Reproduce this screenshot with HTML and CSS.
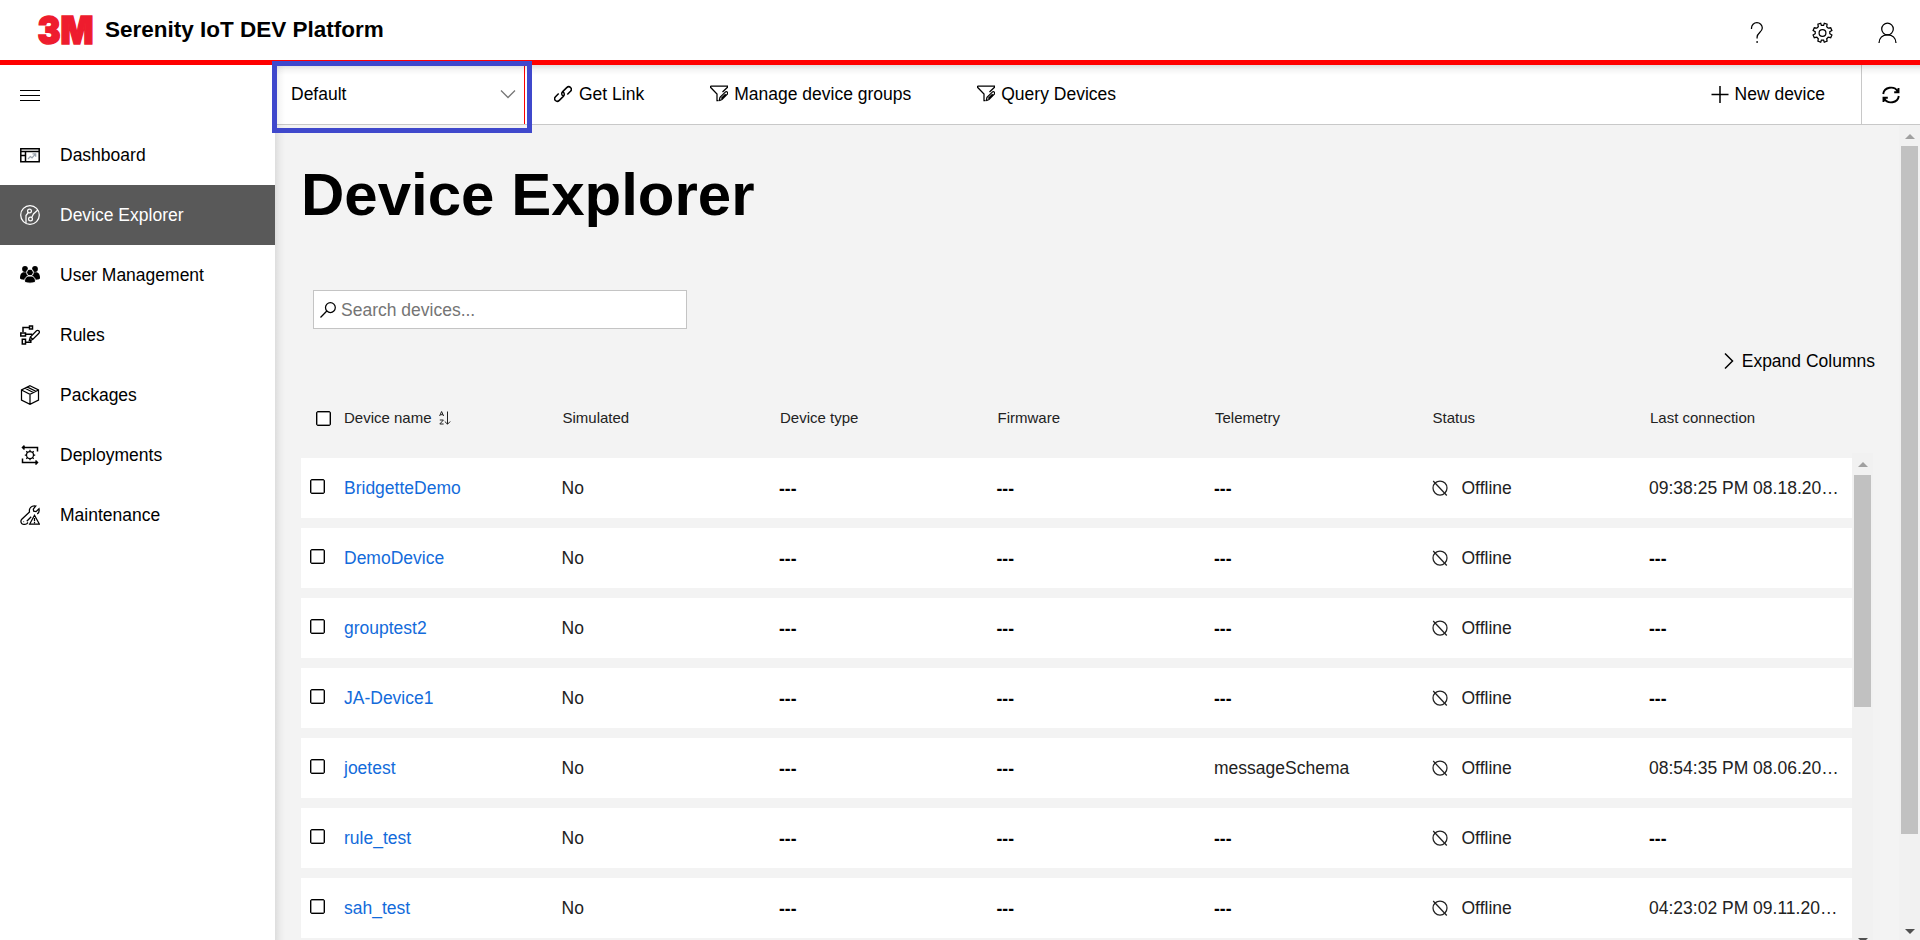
FILE: index.html
```html
<!DOCTYPE html>
<html lang="en">
<head>
<meta charset="utf-8">
<title>Serenity IoT DEV Platform</title>
<link rel="stylesheet" href="styles.css">
</head>
<body>
<svg class="sprite" aria-hidden="true">
  <symbol id="i-offline" viewBox="0 0 16 16"><circle cx="8" cy="8" r="7"/><path d="M1.200 1 14.800 15.500"/></symbol>
  <symbol id="i-filter" viewBox="0 0 18 17"><path d="M.5 1h17v1.300L12.500 7M.5 1v1.300L7 9v6.500h1.500"/><path d="m9.200 15.800.8-3.400 5.300-5.300q1.200-.9 2 0 .8.900 0 2L12 14.500l-2.800 1.300M11.300 13.500l4.300-4.400"/></symbol>
</svg>

<header class="header">
  <svg class="logo" width="56" height="32" viewBox="0 0 56 32"><text class="logo-text" x="-.5" y="29.500" textLength="56" lengthAdjust="spacingAndGlyphs">3M</text></svg>
  <span class="app-title">Serenity IoT DEV Platform</span>
  <div class="header-icons">
    <svg class="icon" width="20" height="22" viewBox="0 0 20 22"><path d="M5.500 7V6a5.400 5.300 0 0 1 10.800 0c0 4-5.200 5-5.200 9v1.500M11.100 19v2"/></svg>
    <svg class="icon" width="22" height="22" viewBox="0 0 22 22"><circle cx="11.500" cy="11" r="3.400"/><path d="M9.700 1.200 10.400 3.400h2.200l.7-2.200 2.800 1-.4 2.500 1.500 1.500 2.500-.4 1.200 2.700-2.100 1.200v2l2.100 1.200-1.200 2.800-2.500-.5-1.500 1.500.4 2.500-2.800 1.100-.7-2.100H10.400l-.7 2.100-2.800-1.100.4-2.500-1.500-1.500-2.500.5-1.200-2.800 2.100-1.200v-2L2.100 8.500l1.200-2.700 2.500.4 1.500-1.500-.4-2.500z"/></svg>
    <svg class="icon" width="20" height="22" viewBox="0 0 20 22"><circle cx="9.500" cy="7" r="5.800"/><path d="M1 21c.2-5 3.600-8.200 8.500-8.200s8.300 3.200 8.500 8.200"/></svg>
  </div>
</header>

<div class="body">
  <nav class="sidebar">
    <div class="nav-item"><svg class="icon" width="20" height="20" viewBox="0 0 20 20"><path class="line" d="M0 5.500h20M0 10.500h20M0 15.500h20"/></svg></div>
    <div class="nav-item"><svg class="icon" width="20" height="20" viewBox="0 0 20 20"><path class="medium" d="M.8 3.700h18.400v13H.8zM.8 6.500h18.400M5.500 6.500v10M.8 10.500h4.700"/><path class="muted" d="m8 14 2.300-2.500 1.700 1.300 3.500-4M12.500 8.800h3.200v3"/></svg>Dashboard</div>
    <div class="nav-item active"><svg class="icon" width="20" height="20" viewBox="0 0 20 20"><circle cx="10" cy="10" r="9.300"/><circle cx="9.500" cy="6" r="1.900"/><circle cx="10.500" cy="14" r="1.900"/><path d="M8.300 7.500 6 10.500v7.500M11.700 12.500l1.800-3.500 4.300-4"/></svg>Device Explorer</div>
    <div class="nav-item"><svg class="icon solid" width="20" height="20" viewBox="0 0 20 20"><circle cx="5" cy="4" r="2.900"/><circle cx="15" cy="4" r="2.900"/><path d="M0 13.500c0-4 1.300-6.200 4-6.200h12c2.700 0 4 2.200 4 6.200-1 .8-2.300 1.200-4 1.200H4c-1.700 0-3-.4-4-1.200z"/><g class="cut"><circle cx="10" cy="7.500" r="3.400"/><path d="M4.500 17c0-4 1.800-6 5.500-6s5.500 2 5.500 6c-2.500 1.600-8.500 1.600-11 0z"/></g></svg>User Management</div>
    <div class="nav-item"><svg class="icon" width="20" height="20" viewBox="0 0 20 20"><path class="medium" d="M3 7V2.500h6.300M9.500 1h3v3h-3zM.8 8h4.700v3H.8zM2.300 14.300h3.200v4.700H2.300zM5.500 9.300h6.800M5.500 17.200h5.300v-2.400"/><path d="m9.300 15.500 1-3.500 6.200-6.200q1.200-.9 2.400 0 1 1.300 0 2.500l-6.200 6.200zM10.300 12l2.300 2.300"/></svg>Rules</div>
    <div class="nav-item"><svg class="icon" width="20" height="20" viewBox="0 0 20 20"><path d="M10 .8 18.500 5v10L10 19.300 1.500 15V5zM1.500 5 10 9.300 18.500 5M10 9.300v10M5 3.300 13.300 7.500M7.500 2.100 15.800 6.300"/></svg>Packages</div>
    <div class="nav-item"><svg class="icon" width="20" height="20" viewBox="0 0 20 20"><path class="medium" d="M17.500 6.500V2.500H2.500M4.500.6 2.500 2.500l2 2M2.500 13.500v4h15M15.500 15.500l2 2-2 2"/><circle cx="10" cy="10" r="3.500"/><path d="M10 4.800v1.700M10 13.500v1.700M4.800 10h1.700M13.500 10h1.700M6.300 6.300l1.200 1.200M12.500 12.500l1.200 1.200M6.300 13.700l1.200-1.200M12.500 7.500l1.200-1.200"/></svg>Deployments</div>
    <div class="nav-item"><svg class="icon" width="20" height="20" viewBox="0 0 20 20"><path d="M8 17.500l-1.200 1.200q-2.800 1.500-5.200-.3-1.500-2.200.2-4.200L9.500 7C8.800 3.200 11.200.3 15.800 1L13.300 4.200l.4 2 2.300.4L19 3.700c.6 3-.3 4.500-1.800 5.300M6.800 16.300l4.400-4.600M3.500 16.600h.6"/><path d="M14.500 10.300 19.300 19H9.700zM14.500 13v3.300M14.500 17v1.200"/></svg>Maintenance</div>
  </nav>

  <main class="main">
    <div class="toolbar">
      <div class="group-select"><span>Default</span><svg class="icon gray" width="16" height="10" viewBox="0 0 16 10"><path d="m1 1.500 7 7 7-7"/></svg></div>
      <div class="tool get-link"><svg class="icon medium" width="18" height="18" viewBox="0 0 18 18"><path d="M9.300 11.300c-2-1.300-2-3.300-.6-4.700l4-4c2.700-2.600 6.300 1 3.800 3.700l-3.200 3.200M8.700 6.700c2 1.300 2 3.300.6 4.700l-4 4c-2.700 2.600-6.300-1-3.800-3.700l3.200-3.200"/></svg>Get Link</div>
      <div class="tool"><svg class="icon" width="18" height="17"><use href="#i-filter"/></svg>Manage device groups</div>
      <div class="tool"><svg class="icon" width="18" height="17"><use href="#i-filter"/></svg>Query Devices</div>
      <div class="tool new-device"><svg class="icon medium" width="18" height="18" viewBox="0 0 18 18"><path d="M.5 9.500h17M9 1v17"/></svg>New device</div>
      <div class="refresh"><svg class="icon thick" width="18" height="18" viewBox="0 0 18 18"><path d="M1.200 8a7.800 7.300 0 0 1 14.600-2.500M16.800 10a7.800 7.300 0 0 1-14.600 2.500M16.500 2v4.300h-4.300M1.500 16v-4.300h4.300"/></svg></div>
    </div>

    <div class="content">
      <div class="page">
        <h1 class="page-title">Device Explorer</h1>
        <div class="search"><svg class="icon" width="16" height="16" viewBox="0 0 16 16"><circle cx="10.400" cy="5.600" r="4.900"/><path d="M6.800 9 .5 15.500"/></svg>Search devices...</div>
        <div class="expand"><svg class="icon medium" width="10" height="18" viewBox="0 0 10 18"><path d="m1 1.500 7.500 7.500L1 16.500"/></svg>Expand Columns</div>

        <div class="grid-head">
          <span class="check"></span>
          <span class="name">Device name <svg class="icon thin" width="12" height="14" viewBox="0 0 12 14"><path d="m.6 5 2-4.500 2 4.500M1.300 3.700h2.600M.8 9h3.600l-3.600 4h3.800M8.500.5v12.500M5.800 10.500l2.700 2.700 2.700-2.700"/></svg></span>
          <span>Simulated</span><span>Device type</span><span>Firmware</span><span>Telemetry</span><span>Status</span><span>Last connection</span>
        </div>

        <div class="grid-body">
          <div class="rows">
            <div class="row"><span class="check"></span><a class="name">BridgetteDemo</a><span>No</span><b>---</b><b>---</b><b>---</b><span class="status"><svg class="icon" width="16" height="16"><use href="#i-offline"/></svg>Offline</span><span class="last">09:38:25 PM 08.18.20…</span></div>
            <div class="row"><span class="check"></span><a class="name">DemoDevice</a><span>No</span><b>---</b><b>---</b><b>---</b><span class="status"><svg class="icon" width="16" height="16"><use href="#i-offline"/></svg>Offline</span><b>---</b></div>
            <div class="row"><span class="check"></span><a class="name">grouptest2</a><span>No</span><b>---</b><b>---</b><b>---</b><span class="status"><svg class="icon" width="16" height="16"><use href="#i-offline"/></svg>Offline</span><b>---</b></div>
            <div class="row"><span class="check"></span><a class="name">JA-Device1</a><span>No</span><b>---</b><b>---</b><b>---</b><span class="status"><svg class="icon" width="16" height="16"><use href="#i-offline"/></svg>Offline</span><b>---</b></div>
            <div class="row"><span class="check"></span><a class="name">joetest</a><span>No</span><b>---</b><b>---</b><span>messageSchema</span><span class="status"><svg class="icon" width="16" height="16"><use href="#i-offline"/></svg>Offline</span><span class="last">08:54:35 PM 08.06.20…</span></div>
            <div class="row"><span class="check"></span><a class="name">rule_test</a><span>No</span><b>---</b><b>---</b><b>---</b><span class="status"><svg class="icon" width="16" height="16"><use href="#i-offline"/></svg>Offline</span><b>---</b></div>
            <div class="row"><span class="check"></span><a class="name">sah_test</a><span>No</span><b>---</b><b>---</b><b>---</b><span class="status"><svg class="icon" width="16" height="16"><use href="#i-offline"/></svg>Offline</span><span class="last">04:23:02 PM 09.11.20…</span></div>
          </div>
          <div class="scrollbar inner"><i class="arrow up"></i><i class="thumb"></i><i class="arrow down"></i></div>
        </div>
      </div>
      <div class="scrollbar outer"><i class="arrow up"></i><i class="thumb"></i><i class="arrow down"></i></div>
    </div>
    <div class="highlight"></div>
  </main>
</div>
</body>
</html>
```
FILE: styles.css
```css
* { box-sizing: border-box; }
body {
  margin: 0;
  height: 940px;
  overflow: hidden;
  display: flex;
  flex-direction: column;
  background: #fff;
  color: #000;
  font: 17.5px/20px "Liberation Sans", Arial, sans-serif;
}
.sprite { position: absolute; width: 0; height: 0; }
.icon { flex: none; fill: none; stroke: currentColor; stroke-width: 1.25; }
.line { stroke-width: 1; }
.thin { stroke-width: 1; }
.medium { stroke-width: 1.5; }
.thick { stroke-width: 1.9; }
.gray { stroke: #777; }
.muted { stroke: #9aa3ad; }
.solid { fill: currentColor; stroke: none; }
.cut { stroke: #fff; stroke-width: 1; }

.header {
  flex: none;
  height: 65px;
  border-bottom: 5px solid #f00;
  display: flex;
  align-items: center;
  padding: 0 22px 0 38px;
}
.logo { overflow: visible; margin-right: 11px; }
.logo-text {
  font: 900 38.5px Inter, "Liberation Sans", sans-serif;
  fill: #ee1c2e;
  stroke: #ee1c2e;
  stroke-width: 1.6;
}
.app-title { font-size: 22.5px; font-weight: 700; }
.header-icons { margin-left: auto; display: flex; gap: 45px; padding-top: 6px; }

.body { flex: 1; min-height: 0; display: flex; }
.sidebar { width: 275px; flex: none; }
.nav-item { height: 60px; display: flex; align-items: center; gap: 20px; padding-left: 20px; }
.nav-item.active { background: #595959; color: #fff; }

.main { flex: 1; min-width: 0; position: relative; display: flex; flex-direction: column; }
.main::before {
  content: "";
  position: absolute;
  inset: 0;
  z-index: 1;
  pointer-events: none;
  background:
    linear-gradient(to bottom, rgba(0,0,0,.13), rgba(0,0,0,.04) 5px, transparent 10px),
    linear-gradient(to right, rgba(0,0,0,.09), rgba(0,0,0,.03) 5px, transparent 10px);
}
.toolbar {
  flex: none;
  height: 60px;
  background: #fff;
  border-bottom: 1px solid #c8c8c8;
  display: flex;
  align-items: center;
}
.group-select {
  width: 250px;
  align-self: stretch;
  border-right: 1px solid #f00;
  display: flex;
  align-items: center;
  justify-content: space-between;
  padding: 0 8px 2px 16px;
}
.tool { display: flex; align-items: center; gap: 6px; margin-right: 66px; padding-bottom: 2px; }
.get-link { margin-left: 29px; gap: 7px; }
.new-device { margin-left: auto; margin-right: 36px; }
.refresh { width: 59px; align-self: stretch; border-left: 1px solid #c8c8c8; display: flex; align-items: center; padding-left: 20px; }

.content { flex: 1; min-height: 0; background: #f3f3f3; display: flex; justify-content: space-between; }
.page { width: 1572px; margin-left: 26px; display: flex; flex-direction: column; }
.page-title { margin: 35px 0 0; font-size: 60px; line-height: 70px; }
.search {
  width: 374px;
  height: 39px;
  margin: 60px 0 0 12px;
  padding-left: 6px;
  border: 1px solid #c4c4c4;
  background: #fff;
  color: #757575;
  display: flex;
  align-items: center;
  gap: 5px;
}
.search .icon { color: #000; }
.expand { margin: 22px -2px 0 0; height: 20px; display: flex; align-items: center; justify-content: flex-end; gap: 8px; }

.grid-head, .row {
  display: grid;
  grid-template-columns: 43px repeat(6, 217.500px) 1fr;
  align-items: center;
  width: 1551px;
}
.grid-head { height: 20px; margin-top: 37px; font-size: 15px; color: #222; }
.grid-head > span:nth-child(n+3) { padding-left: 1px; }
.check { width: 15px; height: 15px; border: 1px solid #000; box-shadow: inset 0 0 0 .5px #333; border-radius: 2px; background: #fff; margin-left: 9px; }
.grid-head .check { margin-left: 15px; }
.name .icon { vertical-align: -2px; margin-left: 3px; }
.grid-body { flex: 1; min-height: 0; margin-top: 25px; display: flex; }
.rows { padding-top: 5px; display: flex; flex-direction: column; gap: 10px; }
.row { height: 60px; flex: none; background: #fff; color: #222; }
.row b { color: #000; padding-top: 2px; }
.row .check { margin-top: -4px; }
a.name { color: #136bdb; }
.status { display: flex; align-items: center; gap: 14px; }
.last { white-space: nowrap; }

.scrollbar { width: 21px; background: #f1f1f1; display: flex; flex-direction: column; align-items: center; flex: none; }
.arrow { border: 5px solid transparent; flex: none; }
.up { border-top: 0; border-bottom-color: #a0a0a0; margin: 9px 0 8px; }
.down { border-bottom: 0; border-top-color: #505050; margin-top: auto; }
.thumb { width: 17px; background: #c1c1c1; flex: none; }
.inner .thumb { height: 232px; }
.outer .thumb { height: 688px; }
.inner .down { margin-bottom: -3px; }
.outer .up { margin-bottom: 7px; }
.outer .down { margin-bottom: 6px; }

.highlight {
  position: absolute;
  left: -3px;
  top: -4px;
  width: 260px;
  height: 72px;
  border: 5px solid #3f48cc;
  z-index: 2;
}
```
